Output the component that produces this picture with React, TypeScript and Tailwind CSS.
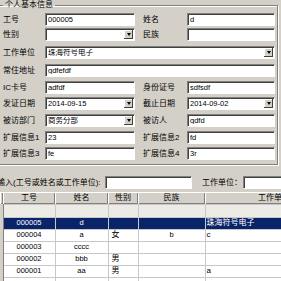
import clsx from 'clsx'

type Row =
  | { kind: 'pair'; label: string; value: string; select?: boolean; rLabel: string; rValue: string; rSelect?: boolean; top: string }
  | { kind: 'full'; label: string; value: string; select?: boolean; top: string }

const rows: Row[] = [
  { kind: 'pair', label: '工号', value: '000005', rLabel: '姓名', rValue: 'd', top: 'mt-[3px]' },
  { kind: 'pair', label: '性别', value: '', select: true, rLabel: '民族', rValue: '', top: 'mt-[2px]' },
  { kind: 'full', label: '工作单位', value: '珠海符号电子', select: true, top: 'mt-[5px]' },
  { kind: 'full', label: '常住地址', value: 'gdfefdf', top: 'mt-[5px]' },
  { kind: 'pair', label: 'IC卡号', value: 'adfdf', rLabel: '身份证号', rValue: 'sdfsdf', top: 'mt-[4px]' },
  { kind: 'pair', label: '发证日期', value: '2014-09-15', select: true, rLabel: '截止日期', rValue: '2014-09-02', rSelect: true, top: 'mt-[3px]' },
  { kind: 'pair', label: '被访部门', value: '商务分部', select: true, rLabel: '被访人', rValue: 'gdfd', top: 'mt-[4px]' },
  { kind: 'pair', label: '扩展信息1', value: '23', rLabel: '扩展信息2', rValue: 'fd', top: 'mt-[4px]' },
  { kind: 'pair', label: '扩展信息3', value: 'fe', rLabel: '扩展信息4', rValue: '3r', top: 'mt-[3px]' },
]

const people = [
  { id: '000005', name: 'd', sex: '', nation: '', unit: '珠海符号电子', selected: true },
  { id: '000004', name: 'a', sex: '女', nation: 'b', unit: 'c' },
  { id: '000003', name: 'cccc', sex: '', nation: '', unit: '' },
  { id: '000002', name: 'bbb', sex: '男', nation: '', unit: '' },
  { id: '000001', name: 'aa', sex: '男', nation: '', unit: 'a' },
  { id: '', name: '', sex: '', nation: '', unit: '' },
]

function Field({ value, select, className }: { value: string; select?: boolean; className: string }) {
  return (
    <div
      className={clsx(
        'flex h-[13px] shrink-0 items-center border border-t-[#808080] border-l-[#808080] border-b-white border-r-white bg-white pl-[2px] shadow-[inset_1px_1px_0_#404040]',
        className,
      )}
    >
      <span className="flex-1 truncate text-[7.5px] leading-none">{value}</span>
      {select && (
        <span className="mr-[1px] flex h-[9px] w-[9px] items-center justify-center bg-[#d4d0c8] shadow-[inset_-1px_-1px_0_#404040,inset_1px_1px_0_white]">
          <span className="h-0 w-0 border-x-[2.5px] border-t-[3px] border-x-transparent border-t-black" />
        </span>
      )}
    </div>
  )
}

export default function App() {
  return (
    <div className="h-[281px] w-[281px] overflow-hidden bg-[#d4d0c8] font-['Liberation_Sans','Noto_Sans_CJK_SC',sans-serif] text-[8px] text-black">
      <fieldset className="ml-[-3px] h-[165px] w-[281px] border border-[#808080] pb-[3px] pl-[5px] shadow-[inset_1px_1px_0_white,1px_1px_0_white]">
        <legend className="px-[2px] text-[8px] leading-[10px]">个人基本信息</legend>
        {rows.map((r) => (
          <div key={r.label} className={clsx('flex items-center', r.top)}>
            <span className="w-[42px] leading-none whitespace-nowrap">{r.label}</span>
            {r.kind === 'pair' ? (
              <>
                <Field value={r.value} select={r.select} className="w-[90px]" />
                <span className="ml-[8px] w-[44px] leading-none whitespace-nowrap">{r.rLabel}</span>
                <Field value={r.rValue} select={r.rSelect} className="w-[88px]" />
              </>
            ) : (
              <Field value={r.value} select={r.select} className="w-[230px]" />
            )}
          </div>
        ))}
      </fieldset>

      <div className="mt-[11px] flex items-center overflow-hidden">
        <span className="ml-[-3px] w-[108px] shrink-0 whitespace-nowrap leading-none">输入(工号或姓名或工作单位):</span>
        <Field value="" className="w-[87px]" />
        <span className="ml-[10px] w-[41px] shrink-0 whitespace-nowrap leading-none">工作单位：</span>
        <Field value="" className="w-[60px]" />
      </div>

      <table className="mt-[3px] w-[320px] table-fixed border-collapse">
        <colgroup>
          <col className="w-[3px]" />
          <col className="w-[52px]" />
          <col className="w-[53px]" />
          <col className="w-[30px]" />
          <col className="w-[67px]" />
          <col className="w-[115px]" />
        </colgroup>
        <thead>
          <tr className="h-[12px]">
            {['', '工号', '姓名', '性别', '民族', '工作单位'].map((h, i) => (
              <th
                key={i}
                className={clsx(
                  'bg-[#d4d0c8] p-0 text-[8px] font-normal leading-none whitespace-nowrap shadow-[inset_1px_1px_0_white,inset_-1px_-1px_0_#808080]',
                  i === 5 ? 'pl-[53px] text-left' : 'text-center',
                )}
              >
                {h}
              </th>
            ))}
          </tr>
        </thead>
        <tbody>
          <tr className="h-[13px] bg-[#ecebe6]">
            <td className="border-r border-[#808080] bg-[#d4d0c8] p-0" />
            <td className="border border-[#c8c8c8] p-0" />
            <td className="border border-[#c8c8c8] p-0" />
            <td className="border border-[#c8c8c8] p-0" />
            <td className="border border-[#c8c8c8] p-0" />
            <td className="border border-[#c8c8c8] p-0" />
          </tr>
          {people.map((p, i) => (
            <tr key={i} className={clsx('h-[12px] text-[7.5px] leading-none', p.selected ? 'bg-[#0a246a] text-white' : 'bg-white')}>
              <td className="border-r border-[#808080] bg-[#d4d0c8] p-0" />
              <td className="border border-[#c8c8c8] p-0 text-center">{p.id}</td>
              <td className="border border-[#c8c8c8] p-0 text-center">{p.name}</td>
              <td className="border border-[#c8c8c8] p-0 pl-[3px] text-left text-[8px]">{p.sex}</td>
              <td className="border border-[#c8c8c8] p-0 text-center">{p.nation}</td>
              <td className="border border-[#c8c8c8] p-0 pl-[1px] text-left text-[8px]">{p.unit}</td>
            </tr>
          ))}
        </tbody>
      </table>
    </div>
  )
}
